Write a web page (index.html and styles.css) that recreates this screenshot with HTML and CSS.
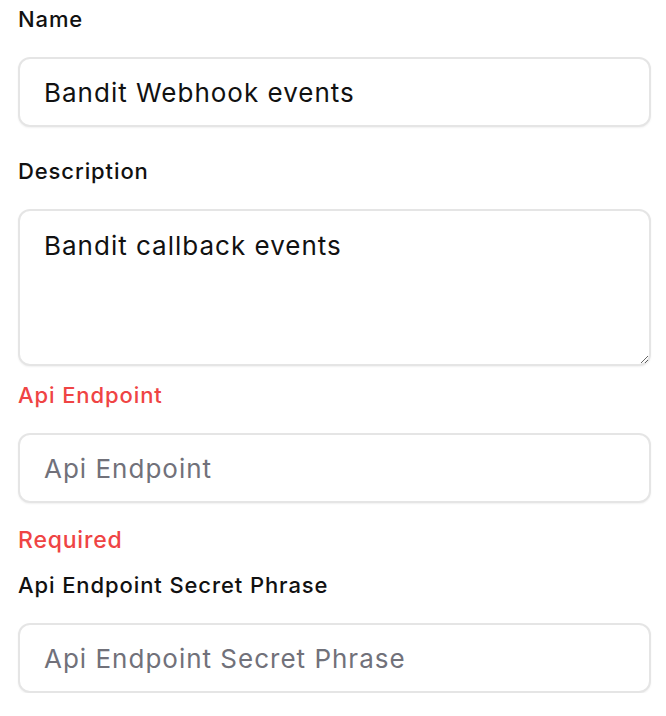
FILE: index.html
```html
<!DOCTYPE html>
<html lang="en">
<head>
    <meta charset="UTF-8">
    <meta name="viewport" content="width=device-width, initial-scale=1.0">
    <title>Webhook Settings</title>
    <link rel="stylesheet" href="styles.css">
</head>
<body>
    <form class="webhook-form">
        <div class="field field-first">
            <label for="name">Name</label>
            <input type="text" id="name" name="name" value="Bandit Webhook events">
        </div>

        <div class="field">
            <label for="description">Description</label>
            <textarea id="description" name="description">Bandit callback events</textarea>
        </div>

        <div class="field has-error">
            <label for="endpoint">Api Endpoint</label>
            <input type="text" id="endpoint" name="endpoint" placeholder="Api Endpoint">
            <span class="error">Required</span>
        </div>

        <div class="field">
            <label for="secret">Api Endpoint Secret Phrase</label>
            <input type="text" id="secret" name="secret" placeholder="Api Endpoint Secret Phrase">
        </div>
    </form>
</body>
</html>
```

FILE: styles.css
```css
body {
    font-family: Inter, "Noto Sans", sans-serif;
    margin: 0;
    padding: 4px 15px 0 18px;
    background-color: #fff;
    color: #111;
}
.webhook-form {
    display: flex;
    flex-direction: column;
    gap: 14px;
}
.field {
    display: flex;
    flex-direction: column;
}
.field-first {
    margin-bottom: 15px;
}
label {
    font-size: 22px;
    line-height: 30px;
    font-weight: 500;
    letter-spacing: 0.9px;
    color: #111;
    margin-bottom: 23px;
}
.has-error label {
    color: #ef4444;
}
input[type="text"],
textarea {
    display: block;
    width: 100%;
    box-sizing: border-box;
    font-family: inherit;
    font-size: 26px;
    letter-spacing: 1px;
    color: #111;
    border: 2px solid #e5e5e5;
    border-radius: 12px;
    background: #fff;
    box-shadow: 0 1px 2px rgba(0,0,0,0.06);
    outline: none;
    margin: 0;
}
input[type="text"] {
    height: 70px;
    padding: 16px 24px;
    line-height: 34px;
}
textarea {
    height: 157px;
    padding: 17px 24px;
    line-height: 36px;
    resize: vertical;
}
::placeholder {
    color: #71717a;
}
.error {
    color: #ef4444;
    font-size: 23px;
    line-height: 32px;
    font-weight: 500;
    letter-spacing: 0.8px;
    margin-top: 21px;
}
```
